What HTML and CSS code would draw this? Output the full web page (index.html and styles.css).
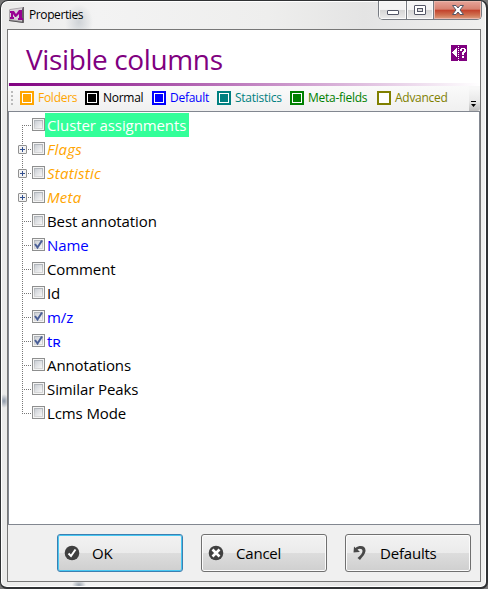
FILE: index.html
```html
<!DOCTYPE html>
<html lang="en">
<head>
<meta charset="utf-8">
<title>Properties</title>
<link rel="stylesheet" href="styles.css">
</head>
<body>
<div class="window">
  <header class="titlebar">
    <svg class="app-icon" width="16" height="16" viewBox="0 0 16 16"><path d="M1 2L15 0V16L0 14V3Z" fill="#aaa5aa"/><path d="M1 3L14 1V14L1 12Z" fill="#d8d2d8"/><path d="M14 0H15V16L13 15V2Z" fill="#656065"/><path d="M0 13L14 15V16L0 14Z" fill="#555"/><path d="M1 4H5L7 7L10 3H13V11H14V13H9V11H10V7L7 10H6L4 7V10H5V12H1V10H2V6H1Z" fill="#990092"/></svg>
    <span class="title">Properties</span>
    <div class="controls">
      <div class="ctl"><svg width="28" height="19"><rect x="8.5" y="9.5" width="11" height="4" rx=".5" fill="#fff" stroke="#535666"/></svg></div>
      <div class="ctl"><svg width="26" height="19"><rect x="7.5" y="4.500" width="11" height="9" rx=".5" fill="#fff" stroke="#535666"/><rect x="10.5" y="7.500" width="5" height="3" fill="#ddd" stroke="#535666"/></svg></div>
      <div class="ctl close"><svg width="47" height="19"><path d="M18.500 4.500H22L24 7L26 4.500H29.500L26 9L29.500 13.500H26L24 11L22 13.500H18.500L22 9Z" fill="#fff" stroke="#535666"/></svg></div>
    </div>
  </header>
  <main class="client">
    <div class="heading">
      <h1>Visible columns</h1>
      <svg class="help" width="16" height="16" viewBox="0 0 16 16" shape-rendering="crispEdges"><path fill="#800080" d="M0 0H16V16H0Z"/><path fill="#fff" d="M1 7H2V6H3V5H4V4H5V3H6V12H5V11H4V10H3V9H2V8H1ZM7 1h1v1H7zM7 3h1v1H7zM7 5h1v1H7zM7 7h1v1H7zM7 9h1v1H7zM7 11h1v1H7zM7 13h1v1H7zM7 15h1v1H7zM10 3H14V4H15V7H14V8H13V10H11V7H12V6H13V4H11V6H9V4H10ZM11 11H13V13H11Z"/></svg>
    </div>
    <div class="rule"></div>
    <nav class="toolbar">
      <i class="grip"></i>
      <div class="item folders"><i class="swatch"></i><span>Folders</span></div>
      <div class="item normal"><i class="swatch"></i><span>Normal</span></div>
      <div class="item default"><i class="swatch"></i><span>Default</span></div>
      <div class="item statistics"><i class="swatch"></i><span>Statistics</span></div>
      <div class="item meta"><i class="swatch"></i><span>Meta-fields</span></div>
      <div class="item advanced"><i class="swatch hollow"></i><span>Advanced</span></div>
      <div class="overflow"><svg width="10" height="25"><path d="M2 15h5v1H2zM2 18h5L4.500 21Z"/></svg></div>
    </nav>
    <section class="tree">
      <div class="row first"><i class="branch"></i><i class="box"></i><span class="label selected">Cluster assignments</span></div>
      <div class="row folder"><i class="branch"><b class="plus"></b></i><i class="box"></i><span class="label">Flags</span></div>
      <div class="row folder"><i class="branch"><b class="plus"></b></i><i class="box"></i><span class="label">Statistic</span></div>
      <div class="row folder"><i class="branch"><b class="plus"></b></i><i class="box"></i><span class="label">Meta</span></div>
      <div class="row"><i class="branch"></i><i class="box"></i><span class="label">Best annotation</span></div>
      <div class="row core"><i class="branch"></i><i class="box"><svg width="13" height="13"><path d="M3 6L5.500 9.500L10 2.500" /></svg></i><span class="label">Name</span></div>
      <div class="row"><i class="branch"></i><i class="box"></i><span class="label">Comment</span></div>
      <div class="row"><i class="branch"></i><i class="box"></i><span class="label">Id</span></div>
      <div class="row core"><i class="branch"></i><i class="box"><svg width="13" height="13"><path d="M3 6L5.500 9.500L10 2.500" /></svg></i><span class="label">m/z</span></div>
      <div class="row core"><i class="branch"></i><i class="box"><svg width="13" height="13"><path d="M3 6L5.500 9.500L10 2.500" /></svg></i><span class="label">tʀ</span></div>
      <div class="row"><i class="branch"></i><i class="box"></i><span class="label">Annotations</span></div>
      <div class="row"><i class="branch"></i><i class="box"></i><span class="label">Similar Peaks</span></div>
      <div class="row last"><i class="branch"></i><i class="box"></i><span class="label">Lcms Mode</span></div>
    </section>
    <footer class="actions">
      <button class="btn primary"><svg width="16" height="16" viewBox="0 0 16 16"><circle cx="8" cy="8" r="7.300" fill="#404040"/><path d="M4.500 8.500L7 11L11.500 4.500" fill="none" stroke="#fff" stroke-width="2"/></svg><span>OK</span></button>
      <button class="btn"><svg width="16" height="16" viewBox="0 0 16 16"><circle cx="8" cy="8" r="7.300" fill="#404040"/><path d="M4.500 4.500L11.500 11.500M11.500 4.500L4.500 11.500" stroke="#fff" stroke-width="2.600"/></svg><span>Cancel</span></button>
      <button class="btn"><svg width="16" height="16" viewBox="0 0 16 16"><path d="M2 1.500L3.500 3C8-.500 14 1 13.500 6C13.300 9 11 11 8 15L5.500 13C9 10 10.500 8 10.500 6C10.500 3.500 7.500 3 5.500 4.500L8 7L1.500 7.500Z" fill="#484848"/></svg><span>Defaults</span></button>
    </footer>
  </main>
</div>
</body>
</html>
```
FILE: styles.css
```css
* { box-sizing: border-box; }
body { margin: 0; background: #777; font-family: "Open Sans", "Noto Sans", sans-serif; overflow: hidden; }
i { font-style: normal; }
svg { display: block; flex: none; }
.window { width: 488px; height: 589px; padding: 0 6px 6px; border: 1px solid #303234; border-width: 1px 2px 2px 1px; border-radius: 8px 8px 7px 7px; box-shadow: inset 0 0 0 1px #fff; background: radial-gradient(ellipse 14px 18px at 78px 21px, #cfd3d7, transparent), radial-gradient(ellipse 5px 7px at 3px 400px, #8d98a8, transparent), radial-gradient(ellipse 7px 5px at 78px 584px, #9aa3ae, transparent), linear-gradient(90deg, #ebebea, #f3f3f3 20%, #eeeeed 55%, #e4e4e4 75%, #f0f0ef); }
.titlebar { height: 28px; display: flex; align-items: flex-start; padding-left: 2px; }
.app-icon { margin-top: 6px; }
.title { margin: 5px 0 0 4px; font-size: 12px; line-height: 18px; letter-spacing: -.4px; color: #000; }
.controls { display: flex; margin-left: auto; width: 104px; height: 19px; border: 1px solid #777b82; border-top: 0; border-radius: 0 0 5px 5px; overflow: hidden; margin-right: -2px; }
.ctl { flex: none; background: linear-gradient(#f4f4f4 47%, #d5d5d5 50%, #ececec); border-right: 1px solid #777b82; box-shadow: inset 0 0 0 1px #fafafa; width: 28px; }
.ctl + .ctl { width: 27px; }
.controls .close { width: 47px; border: 0; background: linear-gradient(#e7a59a, #d78170 46%, #c2402a 50%, #cf7050 78%, #dda080); box-shadow: inset 0 0 0 1px #eab6aa; }
.client { width: 474px; height: 553px; border: 1px solid #777; background: #f0f0f0; display: flex; flex-direction: column; }
.heading { height: 53px; background: #fff; display: flex; justify-content: space-between; align-items: flex-start; padding: 15px 13px 0 18px; }
h1 { margin: -5px 0 0; font-size: 28px; line-height: 38px; font-weight: 400; letter-spacing: -.38px; color: #800080; }
.rule { height: 3px; margin-left: 1px; background: linear-gradient(90deg, #800080, #fff); flex: none; }
.toolbar { height: 25px; background: linear-gradient(#fafafa, #f0f0f0); display: flex; align-items: center; padding: 0 0 1px 3px; flex: none; }
.grip { width: 2px; height: 14px; margin-right: 7px; background: repeating-linear-gradient(#bbb 0 2px, transparent 2px 4px); }
.item { display: flex; align-items: center; gap: 4px; font-size: 12px; letter-spacing: -.27px; white-space: nowrap; flex: none; }
.item span { line-height: 18px; }
.swatch { width: 14px; height: 14px; background: currentColor; border: 2px solid currentColor; box-shadow: inset 0 0 0 1px #fff; }
.hollow { background: #fff; }
.folders { width: 65px; color: #ffa500; }
.normal { width: 67px; color: #000; }
.default { width: 65px; color: #0000ff; }
.statistics { width: 73px; color: #008080; }
.meta { width: 87px; color: #008000; }
.advanced { width: 88px; color: #808000; }
.overflow { margin: 0 0 -1px auto; width: 11px; height: 25px; border-radius: 0 0 3px; background: linear-gradient(#f8f8f8 10%, #e8e8e8 60%, #bcbcbc); }
.tree { height: 414px; flex: none; border: 1px solid #828790; background: #fff; padding: 1px 0 0 8px; }
.row { height: 24px; display: flex; align-items: center; font-size: 15px; color: #000; }
.branch { width: 15px; height: 24px; display: flex; align-items: center; background: repeating-linear-gradient(#777 0 1px, transparent 1px 2px) 5px 0 / 1px 100% no-repeat, repeating-linear-gradient(90deg, #777 0 1px, transparent 1px 2px) 5px 12px / 9px 1px no-repeat; }
.first .branch { background-position: 5px 12px, 5px 12px; }
.last .branch { background-size: 1px 12px, 9px 1px; }
.plus { width: 9px; height: 9px; margin: 1px 0 0 1px; border: 1px solid #919191; border-radius: 1px; background: linear-gradient(#33508f, #33508f) center / 5px 1px no-repeat, linear-gradient(#33508f, #33508f) center / 1px 5px no-repeat, #f3f3f3; }
.box { width: 13px; height: 13px; margin-bottom: 1px; border: 1px solid #8e8f8f; background: linear-gradient(135deg, #cbcfd5, #f6f6f6) center / 7px 7px no-repeat, linear-gradient(#aeb3b9, #d8d8d8) center / 9px 9px no-repeat, #f4f4f4; }
.box svg { margin: -1px; }
.box path { fill: none; stroke: #4a5f97; stroke-width: 2; }
.label { height: 24px; line-height: 24px; padding: 0 2px; letter-spacing: -.1px; white-space: nowrap; }
.selected { background: #33ff99; color: #fff; width: 144px; }
.folder { color: #ffa500; }
.folder .label { font-style: italic; letter-spacing: .25px; }
.core { color: #0000ff; }
.actions { flex: 1; display: flex; gap: 18px; padding: 9px 0 0 49px; }
.btn { width: 126px; height: 38px; border: 1px solid #707070; border-radius: 3px; box-shadow: inset 0 0 0 1px #fbfbfb; background: linear-gradient(#f2f2f2, #ebebeb 49%, #dddddd 50%, #cfcfcf); padding: 0 6px; display: flex; align-items: center; gap: 12px; font: 15px "Open Sans", "Noto Sans", sans-serif; letter-spacing: -.2px; color: #000; }
.primary { border-color: #3c7fb1; box-shadow: inset 0 0 0 1px #48c8f2; }
```
